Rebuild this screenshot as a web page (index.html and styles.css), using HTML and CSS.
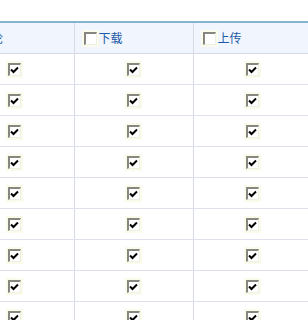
FILE: index.html
```html
<!DOCTYPE html>
<html lang="zh-CN">
<head>
    <meta charset="UTF-8">
    <title>权限</title>
    <link rel="stylesheet" href="styles.css">
</head>
<body>

    <!-- 权限表格 -->
    <table class="perm-table">
        <thead>
            <tr>
                <th><span class="chk"></span>评论</th>
                <th><span class="chk"></span>下载</th>
                <th><span class="chk"></span>上传</th>
            </tr>
        </thead>
        <tbody id="permRows">
        </tbody>
    </table>

    <script>
        // 生成权限行
        var tbody = document.getElementById('permRows');
        var tick = '<svg width="9" height="8" viewBox="0 0 9 8"><path d="M1 3.5 L3.5 6 L8 1.5" fill="none" stroke="#000" stroke-width="2"/></svg>';
        for (var i = 0; i < 9; i++) {
            var tr = document.createElement('tr');
            tr.innerHTML = '<td><span class="chk on">' + tick + '</span></td>' +
                           '<td><span class="chk on">' + tick + '</span></td>' +
                           '<td><span class="chk on">' + tick + '</span></td>';
            tbody.appendChild(tr);
        }
    </script>

</body>
</html>
```

FILE: styles.css
```css
/* 基本 */
* {
    margin: 0;
    padding: 0;
    box-sizing: border-box;
}

body {
    font-family: "Noto Sans CJK SC", sans-serif;
    font-size: 12px;
    background-color: #fff;
    padding-top: 21px;
    overflow: hidden;
}

/* 表格 */
.perm-table {
    border-collapse: collapse;
    margin-left: -45px;
    table-layout: fixed;
    width: 357px;
}

.perm-table th {
    width: 119px;
    height: 31px;
    background-color: #f1f6fe;
    border-top: 2px solid #85b5d2;
    border-bottom: 1px solid #d6d9e6;
    border-right: 1px solid #d6d9e6;
    color: #1c5aa6;
    font-weight: normal;
    text-align: left;
    padding-left: 9px;
    white-space: nowrap;
}

.perm-table th .chk {
    margin-right: 2px;
}

.perm-table td {
    height: 31px;
    border-bottom: 1px solid #dfe2ee;
    border-right: 1px solid #d6d9e6;
    text-align: center;
}

/* 复选框 */
.chk {
    display: inline-block;
    vertical-align: middle;
    width: 13px;
    height: 13px;
    background-color: #fff;
    border-top: 2px solid #87877f;
    border-left: 2px solid #87877f;
    border-bottom: 1px solid #f0efe6;
    border-right: 1px solid #f0efe6;
    outline: 2px solid #fbfbec;
    position: relative;
    top: -1px;
}

.chk svg {
    display: block;
    margin: 1px 0 0 0;
}
```
